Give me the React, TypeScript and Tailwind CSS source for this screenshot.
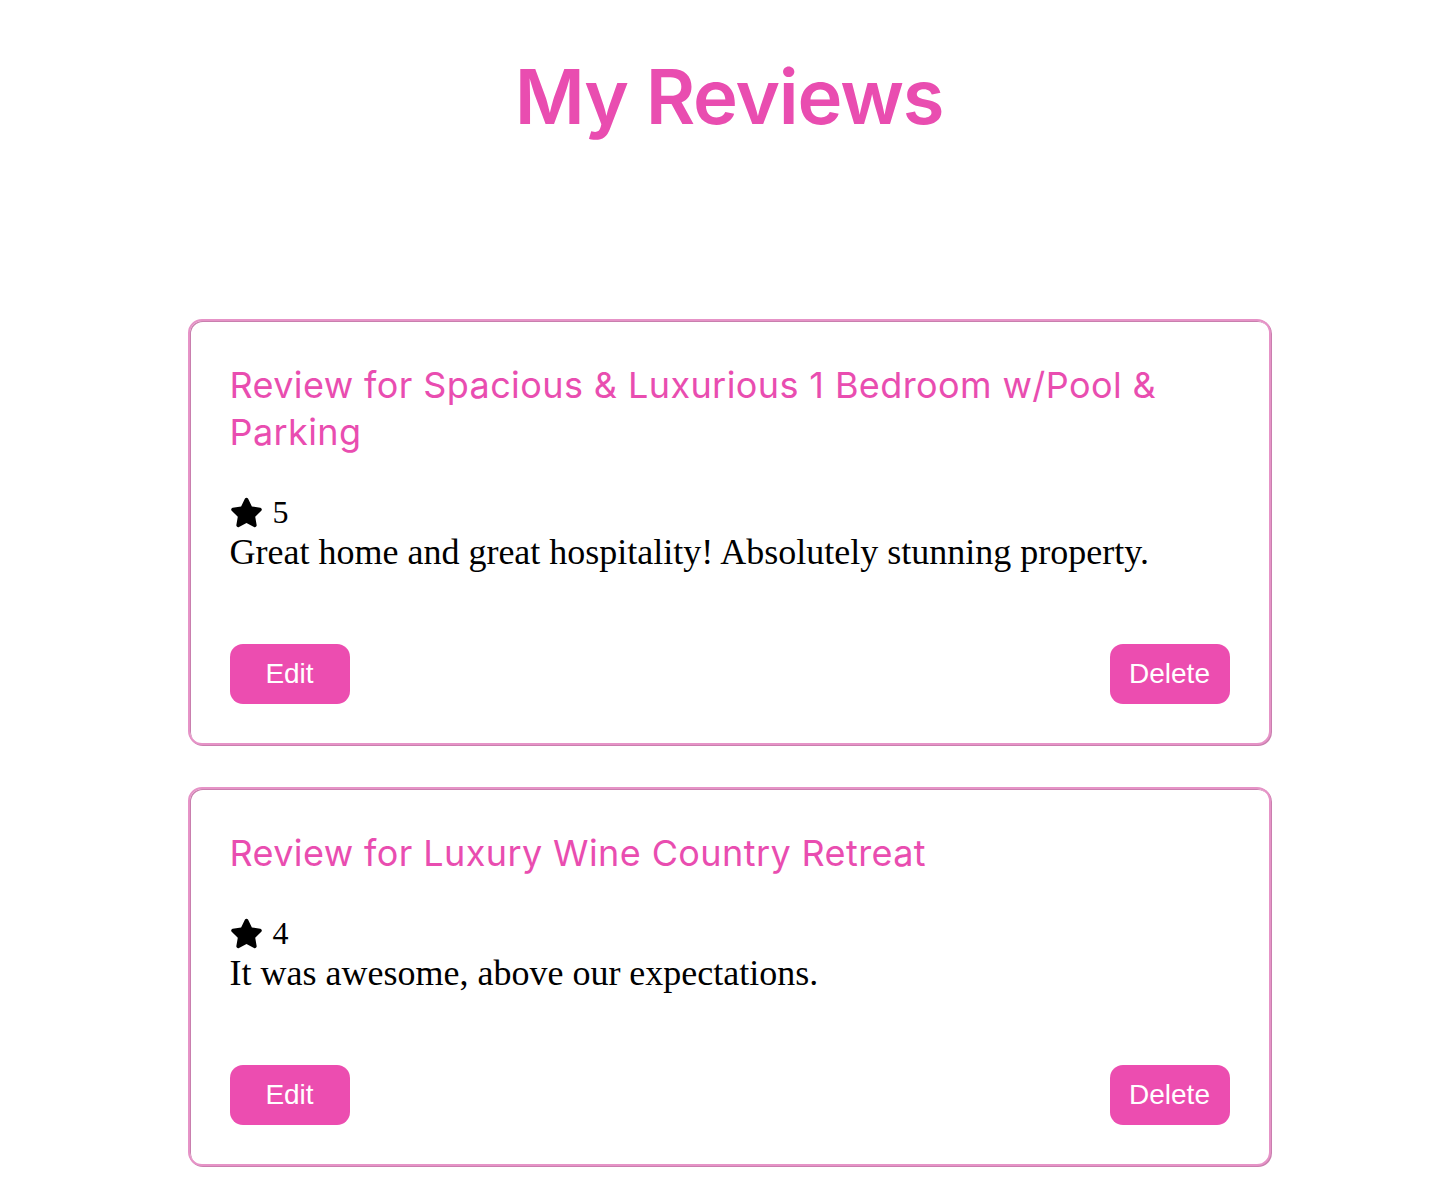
import React from "react";
import { FaStar } from "react-icons/fa";

const reviews = [
  {
    title: "Review for Spacious & Luxurious 1 Bedroom w/Pool & Parking",
    stars: 5,
    text: "Great home and great hospitality! Absolutely stunning property.",
  },
  {
    title: "Review for Luxury Wine Country Retreat",
    stars: 4,
    text: "It was awesome, above our expectations.",
  },
];

export default function App() {
  return (
    <div className="min-h-[1196px] bg-white pl-[18px] flex flex-col items-center">
      <h1
        className="mt-[50px] text-[76px] leading-[92px] font-semibold text-[#e94db0] tracking-[-1.2px]"
        style={{ fontFamily: "Inter, 'Noto Sans', sans-serif" }}
      >
        My Reviews
      </h1>
      <div className="mt-[177px] flex flex-col gap-[42px]">
        {reviews.map((r, i) => (
          <div
            key={i}
            className="w-[1083px] rounded-[14px] border-2 border-[#e693c7] shadow-[inset_1px_1px_0_#c97fae,1px_1px_0_#c97fae] bg-white pl-[40px] pr-[39px] pt-[41px] pb-[39px]"
          >
            <h2
              className="text-[36px] leading-[47px] text-[#e94db0] font-normal tracking-[0.4px]"
              style={{ fontFamily: "Inter, 'Noto Sans', sans-serif" }}
            >
              {r.title}
            </h2>
            <div
              className="mt-[36px] text-[36px] leading-[40px] text-black"
              style={{ fontFamily: "'Liberation Serif', 'Times New Roman', serif" }}
            >
              <div className="flex items-center gap-[10px]">
                <FaStar className="w-[33px] h-[33px]" />
                <span className="text-[32px]">{r.stars}</span>
              </div>
              <p>{r.text}</p>
            </div>
            <div className="mt-[72px] flex justify-between">
              {["Edit", "Delete"].map((b) => (
                <button
                  key={b}
                  className="w-[120px] h-[60px] rounded-[13px] bg-[#ec4db0] text-white text-[28px]"
                  style={{ fontFamily: "'Liberation Sans', Arial, sans-serif" }}
                >
                  {b}
                </button>
              ))}
            </div>
          </div>
        ))}
      </div>
    </div>
  );
}
